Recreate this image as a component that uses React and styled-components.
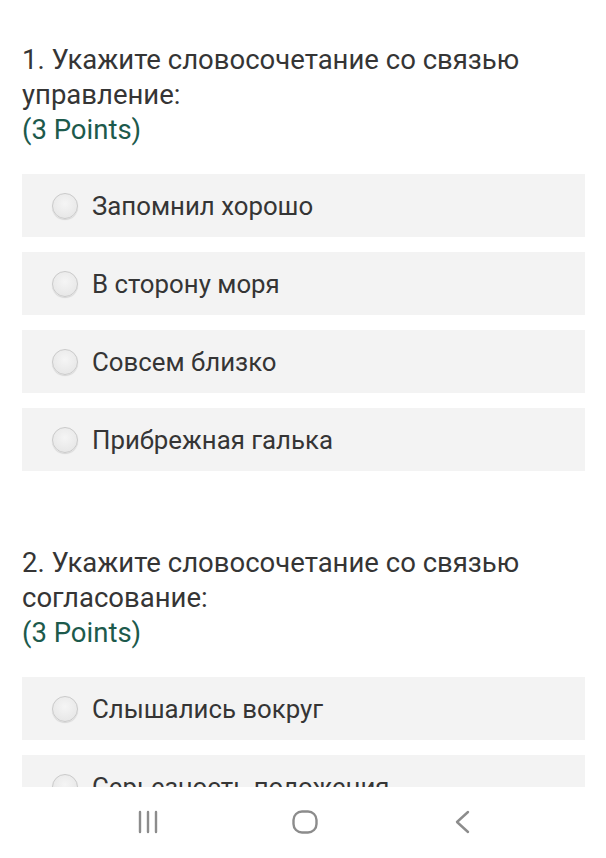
import React from "react";
import styled, { createGlobalStyle } from "styled-components";

const GlobalStyle = createGlobalStyle`
  html, body {
    margin: 0;
    padding: 0;
    background: #ffffff;
  }
  body {
    font-family: Roboto, "Noto Sans", "Liberation Sans", sans-serif;
  }
`;

const Screen = styled.div`
  width: 606px;
  height: 858px;
  display: flex;
  flex-direction: column;
  background: #ffffff;
  overflow: hidden;
`;

const Content = styled.div`
  height: 787px;
  overflow: hidden;
  padding: 0 21px 0 22px;
  box-sizing: border-box;
`;

const Question = styled.section`
  padding-top: ${p => p.$top}px;
`;

const Title = styled.div`
  font-size: 27.5px;
  line-height: 35px;
  color: #353535;
`;

const Points = styled.div`
  font-size: 27.5px;
  line-height: 35px;
  color: #1d5a4c;
`;

const Options = styled.div`
  display: flex;
  flex-direction: column;
  gap: 15px;
  margin-top: 27px;
`;

const Option = styled.label`
  display: flex;
  align-items: center;
  height: 63px;
  background: #f3f3f3;
  padding-left: 30px;
  font-size: 25.8px;
  color: #353535;
`;

const Radio = styled.span`
  width: 24px;
  height: 24px;
  border-radius: 50%;
  border: 1px solid #cacaca;
  background: radial-gradient(circle at 50% 40%, #f5f5f5 0%, #e3e3e3 100%);
  box-shadow: 0 1px 1px rgba(0, 0, 0, 0.12);
  margin-right: 14px;
  flex-shrink: 0;
`;

const NavBar = styled.nav`
  flex: 1;
  display: grid;
  grid-template-columns: repeat(3, 157px);
  justify-content: center;
  align-items: center;
  justify-items: center;
  padding: 0 0 2px 4px;
  background: #ffffff;
`;

const questions = [
  {
    n: 1,
    top: 42,
    text: "1. Укажите словосочетание со связью управление:",
    options: ["Запомнил хорошо", "В сторону моря", "Совсем близко", "Прибрежная галька"],
  },
  {
    n: 2,
    top: 74,
    text: "2. Укажите словосочетание со связью согласование:",
    options: ["Слышались вокруг", "Серьезность положения"],
  },
];

function RecentsIcon() {
  return (
    <svg width="22" height="24" viewBox="0 0 22 24" fill="none" stroke="#8c8c8c" strokeWidth="2.4" strokeLinecap="round">
      <path d="M3 2v20M11 2v20M19 2v20" />
    </svg>
  );
}

function HomeIcon() {
  return (
    <svg width="26" height="24" viewBox="0 0 26 24" fill="none" stroke="#8c8c8c" strokeWidth="2.4">
      <rect x="1.5" y="1.5" width="23" height="21" rx="8.5" />
    </svg>
  );
}

function BackIcon() {
  return (
    <svg width="15" height="24" viewBox="0 0 15 24" fill="none" stroke="#8c8c8c" strokeWidth="2.4" strokeLinecap="round" strokeLinejoin="round">
      <path d="M13 2L2 12l11 10" />
    </svg>
  );
}

export default function App() {
  return (
    <Screen>
      <GlobalStyle />
      <Content>
        {questions.map(q => (
          <Question key={q.n} $top={q.top}>
            <Title>{q.text}</Title>
            <Points>(3 Points)</Points>
            <Options>
              {q.options.map(o => (
                <Option key={o}>
                  <Radio />
                  {o}
                </Option>
              ))}
            </Options>
          </Question>
        ))}
      </Content>
      <NavBar>
        <RecentsIcon />
        <HomeIcon />
        <BackIcon />
      </NavBar>
    </Screen>
  );
}
